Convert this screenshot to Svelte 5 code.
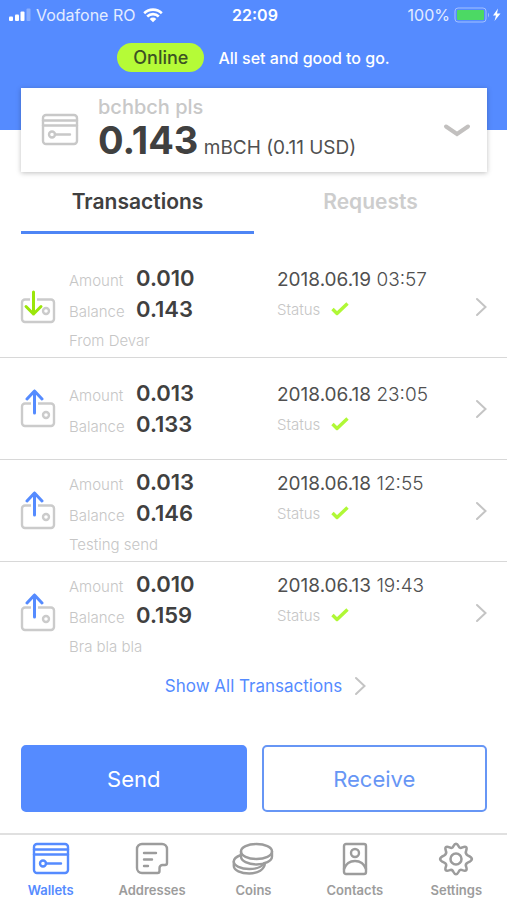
<script lang="ts">
  // Wallet home screen: balance card, latest transactions, send / receive
  const wallet = { name: 'bchbch pls', balance: '0.143', unit: 'mBCH', fiat: '(0.11 USD)' };

  const transactions = [
    { type: 'in', amount: '0.010', balance: '0.143', date: '2018.06.19', time: '03:57', note: 'From Devar' },
    { type: 'out', amount: '0.013', balance: '0.133', date: '2018.06.18', time: '23:05', note: '' },
    { type: 'out', amount: '0.013', balance: '0.146', date: '2018.06.18', time: '12:55', note: 'Testing send' },
    { type: 'out', amount: '0.010', balance: '0.159', date: '2018.06.13', time: '19:43', note: 'Bra bla bla' },
  ];

  const navItems = ['Wallets', 'Addresses', 'Coins', 'Contacts', 'Settings'];

  let tab = $state('Transactions');
  let page = $state('Wallets');
</script>

{#snippet walletIcon()}
  <svg class="icon" width="38" height="34" viewBox="0 0 38 34" aria-hidden="true">
    <rect x="2" y="2" width="34" height="29" rx="3" />
    <path d="M2 7.5h34M2 12.5h34M14 21.5h15" />
    <circle cx="11" cy="21.5" r="3" />
  </svg>
{/snippet}

<div class="screen">
  <header class="top">
    <div class="statusbar">
      <div class="carrier">
        <svg width="24" height="14" viewBox="0 0 24 14" aria-hidden="true">
          <rect x="1" y="8.5" width="4" height="4.5" rx="1" fill="#fff" />
          <rect x="7" y="6.5" width="4" height="6.5" rx="1" fill="#fff" />
          <rect x="12.5" y="3.5" width="4" height="9.5" rx="1" fill="#fff" />
          <rect x="18.5" y="0.5" width="4" height="12.5" rx="1" fill="#fff" opacity="0.3" />
        </svg>
        <span>Vodafone RO</span>
        <svg class="wifi" width="20" height="15" viewBox="0 0 20 15" aria-hidden="true">
          <path d="M1.2 5.2a12.6 12.6 0 0 1 17.6 0M4.2 8.5a8.3 8.3 0 0 1 11.6 0" fill="none" stroke="#fff" stroke-width="2.6" />
          <path d="M10 14.3l-3.3-3.4a4.7 4.7 0 0 1 6.6 0z" fill="#fff" />
        </svg>
      </div>
      <strong class="clock">22:09</strong>
      <div class="battery">
        <span>100%</span>
        <svg width="48" height="16" viewBox="0 0 48 16" aria-hidden="true">
          <rect x="1" y="1" width="31" height="14" rx="3" fill="none" stroke="#a3c0ff" />
          <rect x="3" y="3" width="27" height="10" rx="1" fill="#4cd964" />
          <path d="M34 5.5q2 2.5 0 5z" fill="#a3c0ff" />
          <path d="M44 1.5l-5 7h3l-1.5 5.5 6-7.5h-3.5z" fill="#fff" />
        </svg>
      </div>
    </div>
    <div class="network">
      <span class="badge">Online</span>
      <span class="message">All set and good to go.</span>
    </div>
  </header>

  <button class="wallet" type="button">
    {@render walletIcon()}
    <span class="wallet-info">
      <span class="wallet-name">{wallet.name}</span>
      <span class="wallet-balance"><b>{wallet.balance}</b> {wallet.unit} {wallet.fiat}</span>
    </span>
    <svg width="28" height="20" viewBox="0 0 28 20" aria-hidden="true">
      <path d="M3 6.5l11 7.5 11-7.5" fill="none" stroke="#c2c0bf" stroke-width="4" stroke-linecap="round" />
    </svg>
  </button>

  <div class="tabs" role="tablist">
    {#each ['Transactions', 'Requests'] as name}
      <button type="button" role="tab" class:active={tab === name} aria-selected={tab === name} onclick={() => (tab = name)}>
        {name}
      </button>
    {/each}
  </div>

  <main>
    <ul class="list">
      {#each transactions as tx}
        <li>
          <a class="row" href="#transaction">
            {#if tx.type === 'in'}
              <svg class="tx-icon" width="36" height="40" viewBox="0 0 36 40" aria-hidden="true">
                <path d="M10 12.5H5a3 3 0 0 0-3 3V32a3 3 0 0 0 3 3h26a3 3 0 0 0 3-3V15.5a3 3 0 0 0-3-3H17" />
                <circle cx="26" cy="24" r="3" />
                <path class="arrow in" d="M13.5 5v22M6 19.5l7.5 7.5 7.5-7.5" />
              </svg>
            {:else}
              <svg class="tx-icon" width="36" height="40" viewBox="0 0 36 40" aria-hidden="true">
                <path d="M11 14.5H5a3 3 0 0 0-3 3V34a3 3 0 0 0 3 3h26a3 3 0 0 0 3-3V17.5a3 3 0 0 0-3-3H18" />
                <circle cx="26" cy="26" r="3" />
                <path class="arrow" d="M14.5 24v-22M7 10l7.5-8 7.5 8" />
              </svg>
            {/if}
            <span class="details" class:has-note={tx.note}>
              <span class="label">Amount</span>
              <b class="value">{tx.amount}</b>
              <span class="date">{tx.date} <span class="time">{tx.time}</span></span>
              <span class="label">Balance</span>
              <b class="value">{tx.balance}</b>
              <span class="status">
                Status
                <svg width="18" height="14" viewBox="0 0 18 14" aria-label="confirmed">
                  <path d="M1.5 7l4.5 4.5L16.5 1.5" fill="none" stroke="#b0f836" stroke-width="3.4" stroke-linejoin="round" />
                </svg>
              </span>
              {#if tx.note}
                <span class="note">{tx.note}</span>
              {/if}
            </span>
            <svg class="chevron" width="12" height="20" viewBox="0 0 12 20" aria-hidden="true">
              <path d="M2 2l8.5 8L2 18" />
            </svg>
          </a>
        </li>
      {/each}
    </ul>

    <a class="show-all" href="#all">
      Show All Transactions
      <svg class="chevron" width="12" height="20" viewBox="0 0 12 20" aria-hidden="true">
        <path d="M2 2l8.5 8L2 18" />
      </svg>
    </a>

    <div class="actions">
      <button class="btn primary" type="button">Send</button>
      <button class="btn" type="button">Receive</button>
    </div>
  </main>

  <nav class="tabbar">
    {#each navItems as item}
      <a href={'#' + item.toLowerCase()} class:active={page === item} onclick={() => (page = item)}>
        {#if item === 'Wallets'}
          {@render walletIcon()}
        {:else if item === 'Addresses'}
          <svg class="icon" width="34" height="34" viewBox="0 0 34 34" aria-hidden="true">
            <path d="M7 2h20a5 5 0 0 1 5 5v14c0 1.3-.6 2-2 2h-2.5a3 3 0 0 0-3 3v3c0 1.3-.7 2-2 2H7a5 5 0 0 1-5-5V7a5 5 0 0 1 5-5z" />
            <path d="M9 11h12M9 17.5h8M9 24h4" />
          </svg>
        {:else if item === 'Coins'}
          <svg class="icon" width="42" height="34" viewBox="0 0 42 34" aria-hidden="true">
            <ellipse cx="24.5" cy="9.5" rx="15.5" ry="7.5" />
            <path d="M9 9.5v5c0 4.5 7 8 15.5 8s15.5-3.5 15.5-8v-5" />
            <path d="M9 13c-4.5 1.5-7.2 4-7.2 6.5 0 4.2 7 7.5 15.4 7.5 7 0 12.5-2 14.6-5.5" />
            <path d="M1.8 19.5V24c0 4.2 7 7.5 15.4 7.5C26 31.5 32.5 27.5 33 21" />
          </svg>
        {:else if item === 'Contacts'}
          <svg class="icon" width="26" height="34" viewBox="0 0 26 34" aria-hidden="true">
            <rect x="2" y="2" width="22" height="30" rx="2" />
            <circle cx="13" cy="11" r="4" />
            <path d="M2 27c2-5.5 6-8 11-8s9 2.5 11 8" />
          </svg>
        {:else}
          <svg class="icon" width="36" height="34" viewBox="1 1 34 31" aria-hidden="true">
            <path d="M15.5 4.5Q18 -.5 20.5 4.5Q21.5 7 24 5.5Q29.5 3.5 27.5 9Q26.5 11.5 29 13Q37 16.5 29 20Q26.5 21 27.5 23.5Q29.5 29 24 27Q21.5 26 20.5 28.5Q18 33.5 15.5 28.5Q14.5 26 12 27Q6.5 29 8.5 23.5Q9.5 21 7 20Q-1 16.5 7 13Q9.5 11.5 8.5 9Q6.5 3.5 12 5.5Q14.5 7 15.5 4.5Z" />
            <circle cx="18" cy="16.5" r="5.2" />
          </svg>
        {/if}
        <span>{item}</span>
      </a>
    {/each}
  </nav>
</div>

<style>
  :global(body) {
    background: #fff;
  }
  .screen {
    display: flex;
    flex-direction: column;
    min-height: 100vh;
    color: #404040;
    font-family: Inter, 'Liberation Sans', sans-serif;
  }
  button {
    padding: 0;
    border: 0;
    background: none;
    color: inherit;
    font: inherit;
    cursor: pointer;
  }
  a {
    color: inherit;
    text-decoration: none;
  }
  svg {
    flex: none;
  }

  /* header */
  .top {
    padding-bottom: 58px;
    background: #558bff;
    color: #fff;
  }
  .statusbar {
    display: grid;
    grid-template-columns: 1fr auto 1fr;
    align-items: center;
    height: 30px;
    padding: 0 5px 0 8px;
    font-size: 16px;
  }
  .carrier,
  .battery {
    display: flex;
    align-items: center;
    gap: 4px;
    color: #e3ecff;
  }
  .wifi {
    margin-left: 4px;
  }
  .battery {
    justify-content: flex-end;
  }
  .clock {
    font-weight: 600;
  }
  .network {
    display: flex;
    align-items: center;
    justify-content: center;
    gap: 14px;
    padding-top: 13px;
    font-size: 16px;
    font-weight: 500;
  }
  .badge {
    padding: 0 16px;
    border-radius: 15px;
    background: #b5fb37;
    color: #3c5224;
    font-size: 18px;
    line-height: 29px;
  }

  /* selected wallet */
  .wallet {
    display: flex;
    align-items: center;
    gap: 19px;
    height: 84px;
    margin: -42px 20px 0 21px;
    padding: 0 16px 0 20px;
    background: #fff;
    box-shadow: 0 1px 5px rgba(0, 0, 0, 0.25);
    color: #c8c8c8;
    text-align: left;
  }
  .wallet-info {
    display: flex;
    flex: 1;
    flex-direction: column;
    padding-top: 6px;
  }
  .wallet-name {
    font-size: 20px;
    font-weight: 500;
    line-height: 22px;
  }
  .wallet-balance {
    color: #505050;
    font-size: 19px;
    line-height: 44px;
  }
  .wallet-balance b {
    color: #404040;
    font-size: 38px;
  }

  .tabs {
    display: grid;
    grid-template-columns: 1fr 1fr;
    margin: 0 20px 0 21px;
  }
  .tabs button {
    height: 62px;
    border-bottom: 3px solid transparent;
    color: #cdcdcd;
    font-size: 21px;
    font-weight: 600;
  }
  .tabs .active {
    border-color: #4e85f5;
    color: #404040;
  }

  /* transactions */
  .list {
    margin: 22px 0 0;
    padding: 0;
    list-style: none;
  }
  li + li {
    border-top: 1px solid #d8d8d8;
  }
  .row {
    display: flex;
    align-items: center;
    gap: 13px;
    height: 101px;
    padding: 0 20px;
  }
  .tx-icon {
    fill: none;
    stroke: #cbcbcb;
    stroke-width: 2.4;
  }
  .arrow {
    stroke: #558bff;
    stroke-width: 3;
    stroke-linecap: round;
    stroke-linejoin: round;
  }
  .arrow.in {
    stroke: #9be60a;
  }
  .details {
    display: grid;
    flex: 1;
    grid-template-columns: 67px 1fr 185px;
    align-items: baseline;
    line-height: 31px;
  }
  .has-note {
    padding-top: 5px;
  }
  .label,
  .status,
  .note {
    color: #c6c6c6;
    font-size: 15px;
    font-weight: 300;
  }
  .label,
  .date {
    line-height: 24px;
  }
  .note {
    grid-column: 1 / -1;
  }
  .value {
    font-size: 22px;
    font-weight: 600;
  }
  .date {
    color: #505050;
    font-size: 19px;
  }
  .time {
    font-weight: 300;
  }
  .status {
    display: flex;
    align-items: center;
    align-self: start;
    gap: 11px;
  }
  .chevron {
    fill: none;
    stroke: #c4c4c4;
    stroke-width: 2;
    stroke-linecap: round;
  }
  .show-all {
    display: flex;
    align-items: center;
    justify-content: center;
    gap: 12px;
    height: 46px;
    padding-left: 24px;
    color: #558bff;
    font-size: 17px;
  }

  .actions {
    display: grid;
    grid-template-columns: 1fr 1fr;
    gap: 15px;
    padding: 36px 20px 21px 21px;
  }
  .btn {
    height: 67px;
    border: 2px solid #6796f5;
    border-radius: 5px;
    color: #6796f5;
    font-size: 22px;
  }
  .primary {
    border-color: #558bff;
    background: #558bff;
    color: #fff;
  }

  /* bottom navigation */
  .tabbar {
    display: grid;
    grid-template-columns: repeat(5, 1fr);
    margin-top: auto;
    border-top: 2px solid #e0e0e0;
  }
  .tabbar a {
    display: flex;
    flex-direction: column;
    align-items: center;
    gap: 5px;
    padding: 7px 0 2px;
    color: #9c9c9c;
    font-size: 13px;
    font-weight: 600;
    line-height: 18px;
  }
  .tabbar .active {
    color: #558bff;
  }
  .icon {
    fill: none;
    stroke: currentColor;
    stroke-width: 2.4;
    stroke-linecap: round;
    stroke-linejoin: round;
  }
</style>
